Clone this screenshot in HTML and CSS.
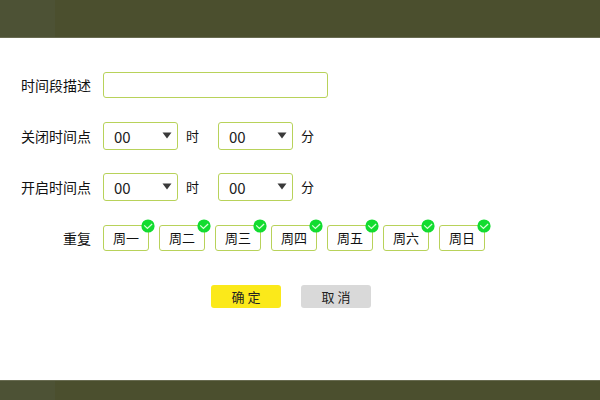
FILE: index.html
```html
<!DOCTYPE html>
<html lang="zh-CN">
<head>
<meta charset="utf-8">
<title>时间段</title>
<link rel="stylesheet" href="styles.css">
</head>
<body>
<svg class="defs" aria-hidden="true">
  <symbol id="arrow" viewBox="0 0 10 7"><path d="M0.5 0.5h9L5 6.5z" fill="#3a3a3a"/></symbol>
  <symbol id="check" viewBox="0 0 14 14"><circle cx="7" cy="7" r="6.6" fill="#12dc30"/><path d="M3.2 6.4l3.2 3 4.7-4.4" fill="none" stroke="#d8ffd8" stroke-width="1.3"/></symbol>
</svg>
<header class="band band-top"></header>
<main>
  <form class="form">
    <div class="row">
      <label class="name" for="desc">时间段描述</label>
      <input class="text" id="desc" type="text">
    </div>
    <div class="row">
      <label class="name" for="off-h">关闭时间点</label>
      <span class="pick"><select id="off-h"><option>00</option></select><svg class="arrow"><use href="#arrow"/></svg></span>
      <label class="unit" for="off-h">时</label>
      <span class="pick"><select id="off-m"><option>00</option></select><svg class="arrow"><use href="#arrow"/></svg></span>
      <label class="unit" for="off-m">分</label>
    </div>
    <div class="row">
      <label class="name" for="on-h">开启时间点</label>
      <span class="pick"><select id="on-h"><option>00</option></select><svg class="arrow"><use href="#arrow"/></svg></span>
      <label class="unit" for="on-h">时</label>
      <span class="pick"><select id="on-m"><option>00</option></select><svg class="arrow"><use href="#arrow"/></svg></span>
      <label class="unit" for="on-m">分</label>
    </div>
    <div class="row" role="group" aria-labelledby="repeat">
      <span class="name" id="repeat">重复</span>
      <div class="days">
        <label class="day"><input type="checkbox" checked>周一<svg class="check"><use href="#check"/></svg></label>
        <label class="day"><input type="checkbox" checked>周二<svg class="check"><use href="#check"/></svg></label>
        <label class="day"><input type="checkbox" checked>周三<svg class="check"><use href="#check"/></svg></label>
        <label class="day"><input type="checkbox" checked>周四<svg class="check"><use href="#check"/></svg></label>
        <label class="day"><input type="checkbox" checked>周五<svg class="check"><use href="#check"/></svg></label>
        <label class="day"><input type="checkbox" checked>周六<svg class="check"><use href="#check"/></svg></label>
        <label class="day"><input type="checkbox" checked>周日<svg class="check"><use href="#check"/></svg></label>
      </div>
    </div>
    <div class="actions">
      <button class="btn ok" type="submit">确 定</button>
      <button class="btn" type="button">取 消</button>
    </div>
  </form>
</main>
<footer class="band band-bottom"></footer>
</body>
</html>
```
FILE: styles.css
```css
* { box-sizing: border-box; }
body {
  margin: 0;
  min-height: 100vh;
  display: flex;
  flex-direction: column;
  background: #fff;
  color: #111;
  font-family: "Noto Sans CJK SC", sans-serif;
  font-size: 14px;
  line-height: 20px;
}
.defs { position: absolute; width: 0; height: 0; }
.band { background: linear-gradient(90deg, #4d5235 55px, #4b4f2e 55px); }
.band-top { height: 38px; border-bottom: 1px solid #686b51; }
.band-bottom { height: 20px; border-top: 1px solid #686b51; }
main { flex: 1; padding: 33px 20px 20px; }
.form { display: flex; flex-direction: column; gap: 23px; }
.row { display: flex; align-items: center; height: 28px; }
.name { width: 71px; margin-right: 12px; text-align: right; white-space: nowrap; }
.text {
  width: 225px;
  height: 26px;
  padding: 0 10px;
  border: 1px solid #b8d25a;
  border-radius: 3px;
  font: inherit;
}
.pick { position: relative; width: 75px; height: 28px; }
select {
  appearance: none;
  width: 100%;
  height: 100%;
  padding: 0 10px;
  border: 1px solid #b8d25a;
  border-radius: 3px;
  background: #fff;
  color: #222;
  font-family: "Noto Sans CJK SC", sans-serif;
  font-size: 15px;
}
.arrow {
  position: absolute;
  top: 10px;
  right: 6px;
  width: 10px;
  height: 7px;
  pointer-events: none;
}
.unit { width: 40px; padding-left: 8px; font-size: 13px; }
.days { display: flex; gap: 10px; }
.day {
  position: relative;
  width: 46px;
  height: 26px;
  border: 1px solid #b8d25a;
  border-radius: 3px;
  font-size: 13px;
  line-height: 24px;
  text-align: center;
}
.day input {
  position: absolute;
  inset: 0;
  margin: 0;
  opacity: 0;
}
.check {
  display: none;
  position: absolute;
  top: -7px;
  right: -7px;
  width: 14px;
  height: 14px;
}
.day input:checked ~ .check { display: block; }
.actions {
  display: flex;
  gap: 20px;
  padding: 10px 0 0 191px;
}
.btn {
  width: 70px;
  height: 23px;
  padding: 0;
  border: 0;
  border-radius: 3px;
  background: #d9d9d9;
  color: #222;
  font: inherit;
  font-size: 13px;
}
.ok { background: #fbe91a; }
```
